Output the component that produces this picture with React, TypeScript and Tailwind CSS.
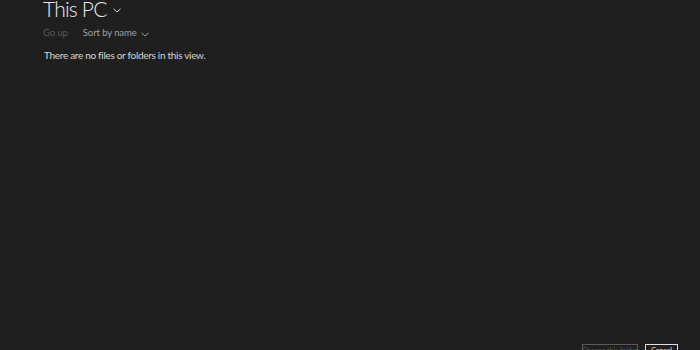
export default function App() {
  return (
    <div className="w-[700px] h-[350px] bg-[#1f1f1f] overflow-hidden flex flex-col font-['Lato',sans-serif] select-none">
      {/* Header */}
      <div className="pl-[43px] flex items-start h-[21px] -mt-[2px]">
        <span className="text-[21px] font-light leading-none text-[#e8e8e8] tracking-[-0.8px]">This PC</span>
        <svg width="8" height="5" viewBox="0 0 8 5" className="ml-[6px] mt-[10px]">
          <path d="M0.5 0.8 L4 4 L7.5 0.8" stroke="#d8d8d8" strokeWidth="1" fill="none" />
        </svg>
      </div>

      {/* Toolbar */}
      <div className="pl-[43px] mt-[8.5px] flex items-start h-[10px] text-[9.5px] leading-none tracking-[-0.1px]">
        <span className="text-[#5c5c5c]">Go up</span>
        <span className="ml-[15px] text-[#a0a0a0]">Sort by name</span>
        <svg width="8" height="5" viewBox="0 0 8 5" className="ml-[4px] mt-[4px]">
          <path d="M0.5 0.8 L4 4 L7.5 0.8" stroke="#a0a0a0" strokeWidth="1" fill="none" />
        </svg>
      </div>

      <div className="pl-[44px] mt-[12.5px] text-[10px] leading-none text-[#d6d6d6] tracking-[-0.3px]">
        There are no files or folders in this view.
      </div>

      {/* Footer buttons */}
      <div className="mt-auto flex justify-end gap-[7px] pr-[22px] h-[6px] items-start">
        <div className="w-[56px] h-[14px] border border-[#5a5a5a] text-[7px] leading-none text-[#5a5a5a] flex items-start justify-center pt-[2px] whitespace-nowrap overflow-hidden">
          Choose this folder
        </div>
        <div className="w-[33px] h-[14px] border border-[#e0e0e0] text-[7px] leading-none text-[#e0e0e0] flex items-start justify-center pt-[2px] overflow-hidden">
          Cancel
        </div>
      </div>
    </div>
  )
}
